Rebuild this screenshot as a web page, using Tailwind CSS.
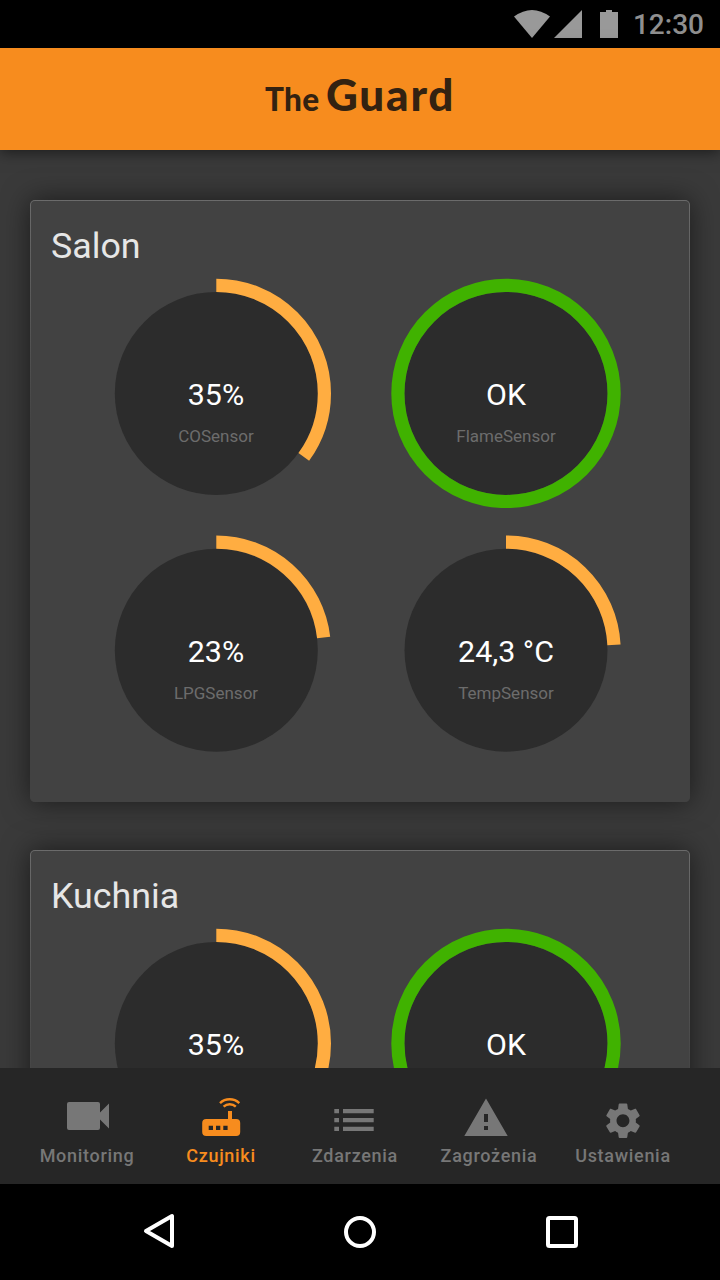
<!DOCTYPE html>
<html lang="pl">
<head>
<meta charset="utf-8">
<title>The Guard</title>
<script src="https://cdn.jsdelivr.net/npm/@tailwindcss/browser@4"></script>
</head>
<body class="flex h-[1280px] w-[720px] flex-col overflow-hidden bg-[#3a3a3a] font-['Roboto',sans-serif]">

<!-- Status bar -->
<div class="flex h-12 shrink-0 items-center justify-end bg-black pr-4">
  <svg class="h-12 w-[110px] shrink-0" viewBox="510 0 110 48" fill="#999">
    <path d="M514 16.6Q532 3.4 550 16.6L532 38Z"/>
    <path d="M554 38L582 10V38Z"/>
    <path d="M606 10h6v2h6v26h-18V12h6Z"/>
  </svg>
  <span class="w-[84px] pt-0.5 text-right text-[28px] leading-[46px] font-medium whitespace-nowrap text-[#8f8f8f]">12:30</span>
</div>

<!-- App header -->
<header class="z-10 flex h-[102px] shrink-0 items-baseline bg-[#f78c1e] pt-[21px] pl-[265px] font-['Lato',sans-serif] font-black text-[#332211] shadow-[0_2px_14px_rgba(0,0,0,0.55)]">
  <span class="w-[61px] text-[31.5px] leading-[50px] tracking-[0.3px]">The</span>
  <span class="text-[44px] leading-[50px] tracking-[1.8px]">Guard</span>
</header>

<!-- Rooms -->
<main class="flex min-h-0 flex-1 flex-col gap-12 overflow-hidden px-[30px] pt-[50px]">

  <section class="h-[602px] shrink-0 rounded-[5px] bg-linear-to-b from-[#6b6b6b] to-[#424242] to-40% px-px pt-px shadow-[0_0_28px_rgba(0,0,0,0.55)]">
    <div class="h-full rounded-[4px] bg-[#424242] pt-[21px] pl-5">
      <h2 class="h-[56px] text-[35.8px] leading-[48px] text-[#e6e6e6]">Salon</h2>
      <div class="grid grid-cols-[230px_230px] gap-x-[60px] gap-y-[27px] pl-[50px]">
        <div class="grid h-[230px]">
          <svg class="[grid-area:1/1]" viewBox="0 0 230 230"><circle cx="115.3" cy="115.4" r="101.5" fill="#2c2c2c"/><circle cx="115.3" cy="115.4" r="108.1" fill="none" stroke="#ffad41" stroke-width="13.2" pathLength="100" stroke-dasharray="35 65" transform="rotate(-90 115.3 115.4)"/></svg>
          <div class="pt-[98px] text-center [grid-area:1/1]">
            <p class="text-[30.4px] leading-[38px] text-white">35%</p>
            <p class="pt-[9px] text-[17px] leading-[26px] text-[#6c6c6c]">COSensor</p>
          </div>
        </div>
        <div class="grid h-[230px]">
          <svg class="[grid-area:1/1]" viewBox="0 0 230 230"><circle cx="115" cy="115.4" r="101.5" fill="#2c2c2c"/><circle cx="115" cy="115.4" r="108.1" fill="none" stroke="#40b200" stroke-width="13.2"/></svg>
          <div class="pt-[98px] text-center [grid-area:1/1]">
            <p class="text-[30.4px] leading-[38px] text-white">OK</p>
            <p class="pt-[9px] text-[17px] leading-[26px] text-[#6c6c6c]">FlameSensor</p>
          </div>
        </div>
        <div class="grid h-[230px]">
          <svg class="[grid-area:1/1]" viewBox="0 0 230 230"><circle cx="115.3" cy="115.2" r="101.5" fill="#2c2c2c"/><circle cx="115.3" cy="115.2" r="108.1" fill="none" stroke="#ffad41" stroke-width="13.2" pathLength="100" stroke-dasharray="23.1 76.9" transform="rotate(-90 115.3 115.2)"/></svg>
          <div class="pt-[98px] text-center [grid-area:1/1]">
            <p class="text-[30.4px] leading-[38px] text-white">23%</p>
            <p class="pt-[9px] text-[17px] leading-[26px] text-[#6c6c6c]">LPGSensor</p>
          </div>
        </div>
        <div class="grid h-[230px]">
          <svg class="[grid-area:1/1]" viewBox="0 0 230 230"><circle cx="115" cy="115.2" r="101.5" fill="#2c2c2c"/><circle cx="115" cy="115.2" r="108.1" fill="none" stroke="#ffad41" stroke-width="13.2" pathLength="100" stroke-dasharray="24.2 75.8" transform="rotate(-90 115 115.2)"/></svg>
          <div class="pt-[98px] text-center [grid-area:1/1]">
            <p class="text-[30.4px] leading-[38px] text-white">24,3 °C</p>
            <p class="pt-[9px] text-[17px] leading-[26px] text-[#6c6c6c]">TempSensor</p>
          </div>
        </div>
      </div>
    </div>
  </section>

  <section class="h-[602px] shrink-0 rounded-[5px] bg-linear-to-b from-[#6b6b6b] to-[#424242] to-40% px-px pt-px shadow-[0_0_28px_rgba(0,0,0,0.55)]">
    <div class="h-full rounded-[4px] bg-[#424242] pt-[21px] pl-5">
      <h2 class="h-[56px] text-[35.8px] leading-[48px] text-[#e6e6e6]">Kuchnia</h2>
      <div class="grid grid-cols-[230px_230px] gap-x-[60px] pl-[50px]">
        <div class="grid h-[230px]">
          <svg class="[grid-area:1/1]" viewBox="0 0 230 230"><circle cx="115.3" cy="115.4" r="101.5" fill="#2c2c2c"/><circle cx="115.3" cy="115.4" r="108.1" fill="none" stroke="#ffad41" stroke-width="13.2" pathLength="100" stroke-dasharray="35 65" transform="rotate(-90 115.3 115.4)"/></svg>
          <div class="pt-[98px] text-center [grid-area:1/1]">
            <p class="text-[30.4px] leading-[38px] text-white">35%</p>
          </div>
        </div>
        <div class="grid h-[230px]">
          <svg class="[grid-area:1/1]" viewBox="0 0 230 230"><circle cx="115" cy="115.4" r="101.5" fill="#2c2c2c"/><circle cx="115" cy="115.4" r="108.1" fill="none" stroke="#40b200" stroke-width="13.2"/></svg>
          <div class="pt-[98px] text-center [grid-area:1/1]">
            <p class="text-[30.4px] leading-[38px] text-white">OK</p>
          </div>
        </div>
      </div>
    </div>
  </section>
</main>

<!-- Tab bar -->
<nav class="grid h-[116px] shrink-0 grid-cols-[134px_134px_134px_134px_134px] bg-[#262626] pl-5 text-center text-[18px] leading-6 font-medium tracking-[0.7px] text-[#777]">
  <a class="flex flex-col items-center">
    <svg class="h-[76px] w-[134px]" viewBox="20 1068 134 76" fill="#777"><path d="M69 1102h29a2 2 0 0 1 2 2v8.500l9-9v25l-9-9v8.500a2 2 0 0 1-2 2H69a2 2 0 0 1-2-2v-24a2 2 0 0 1 2-2Z"/></svg>
    <span>Monitoring</span>
  </a>
  <a class="flex flex-col items-center text-[#f78c1e]">
    <svg class="h-[76px] w-[134px]" viewBox="154 1068 134 76" fill="#f78c1e">
      <path fill-rule="evenodd" d="M206.200 1119H228v-8h4v8h4.200a4 4 0 0 1 4 4v9a4 4 0 0 1-4 4H206.200a4 4 0 0 1-4-4v-9a4 4 0 0 1 4-4ZM208.700 1125.700v4.300h4.300v-4.300ZM216 1125.700v4.300h4.300v-4.300ZM223.300 1125.700v4.300h4.300v-4.300Z"/>
      <path d="M220 1103.100C225.400 1098 233.900 1098 239.300 1103.100M223.600 1106.700C227 1103.500 232.400 1103.500 235.800 1106.700" fill="none" stroke="#f78c1e" stroke-width="2.400"/>
    </svg>
    <span>Czujniki</span>
  </a>
  <a class="flex flex-col items-center">
    <svg class="h-[76px] w-[134px]" viewBox="288 1068 134 76" fill="#777"><path d="M334.300 1109h4.700v4.300h-4.700ZM343 1109h30.700v4.300H343ZM334.300 1118h4.700v4.300h-4.700ZM343 1118h30.700v4.300H343ZM334.300 1126.700h4.700v4.300h-4.700ZM343 1126.700h30.700v4.300H343Z"/></svg>
    <span>Zdarzenia</span>
  </a>
  <a class="flex flex-col items-center">
    <svg class="h-[76px] w-[134px]" viewBox="422 1068 134 76" fill="#777"><path fill-rule="evenodd" d="M486 1098.500L507.700 1136H464.300ZM484 1114v8h4v-8ZM484 1126v4h4v-4Z"/></svg>
    <span>Zagrożenia</span>
  </a>
  <a class="flex flex-col items-center">
    <svg class="h-[76px] w-[134px]" viewBox="556 1068 134 76" fill="#777"><path transform="translate(601.500 1099.300) scale(1.790)" d="M19.140 12.940c.040-.3.060-.610.060-.940 0-.320-.020-.640-.070-.940l2.030-1.580c.180-.140.230-.410.120-.610l-1.920-3.320c-.120-.220-.370-.290-.590-.220l-2.390.960c-.5-.380-1.030-.7-1.620-.940l-.360-2.540c-.040-.240-.240-.410-.480-.410h-3.840c-.240 0-.430.170-.470.410l-.360 2.540c-.590.240-1.130.570-1.620.940l-2.390-.960c-.220-.080-.470 0-.590.220L2.740 8.870c-.120.210-.080.470.120.610l2.030 1.580c-.050.3-.090.630-.090.940s.020.640.070.940l-2.030 1.580c-.180.140-.230.410-.120.610l1.920 3.320c.120.220.370.290.590.220l2.390-.960c.5.380 1.030.7 1.620.940l.360 2.540c.050.240.240.410.480.410h3.840c.240 0 .440-.170.470-.410l.360-2.540c.590-.240 1.130-.560 1.620-.940l2.390.960c.220.080.470 0 .590-.220l1.920-3.320c.120-.220.070-.470-.120-.610l-2.010-1.580zM12 15.600c-1.980 0-3.600-1.620-3.600-3.600s1.620-3.600 3.600-3.600 3.600 1.620 3.600 3.600-1.620 3.600-3.600 3.600z"/></svg>
    <span>Ustawienia</span>
  </a>
</nav>

<!-- System navigation -->
<div class="h-24 shrink-0 bg-black">
  <svg class="h-24 w-[720px]" viewBox="0 1184 720 96" fill="none" stroke="#fff" stroke-width="4" stroke-linejoin="round">
    <path d="M172 1216V1246L146 1231Z"/>
    <circle cx="360" cy="1232" r="14"/>
    <rect x="548" y="1218" width="28" height="28" rx="1.500"/>
  </svg>
</div>
</body>
</html>
